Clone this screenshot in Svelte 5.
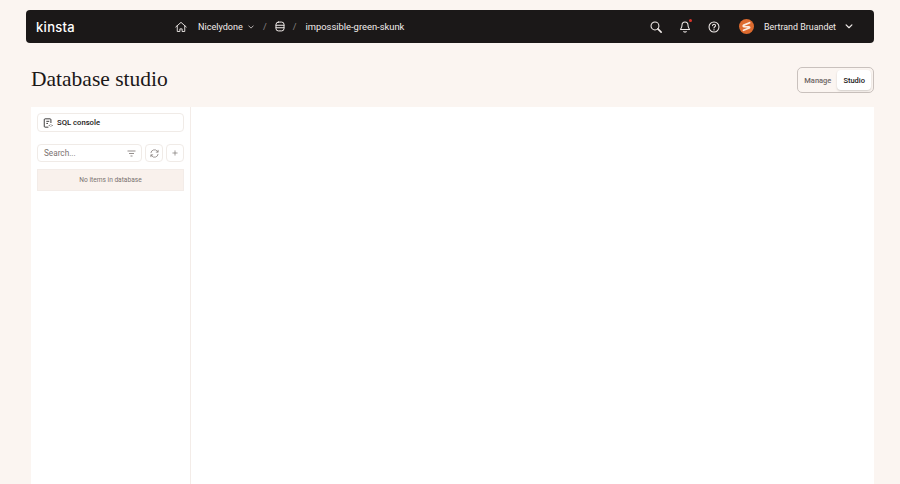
<script>
  let tab = $state("Studio");
  const tabs = ["Manage", "Studio"];
</script>

<div class="page">
  <header class="nav">
    <span class="logo">kinsta</span>
    <div class="crumbs">
      <svg class="ico" width="12" height="12" viewBox="0 0 16 16"><path d="M1 8 8 1.800 15 8M3 6.500V14h3.500v-3.500h3V14H13V6.500"/></svg>
      <span class="crumb first">Nicelydone</span>
      <svg class="ico chev-s" width="6" height="4" viewBox="0 0 8 5"><path d="M1 1l3 3 3-3"/></svg>
      <span class="sep one">/</span>
      <svg class="ico" width="10" height="11" viewBox="0 0 12 13"><rect x="1.200" y="1.200" width="9.600" height="10.600" rx="2.800"/><path d="M1.200 5h9.600M1.200 8h9.600"/></svg>
      <span class="sep two">/</span>
      <span class="crumb slug">impossible-green-skunk</span>
    </div>
    <div class="actions">
      <svg class="ico" width="12" height="12" viewBox="0 0 14 14"><circle cx="5.800" cy="5.800" r="4.600"/><path d="M9.200 9.200 13 13" stroke-width="1.800"/></svg>
      <span class="bell">
        <svg class="ico" width="12" height="12" viewBox="0 0 14 14"><path d="M7 1.200c-2.300 0-3.500 1.700-3.500 3.800 0 2.800-1.300 4-1.800 4.800h10.600c-.5-.8-1.800-2-1.800-4.800 0-2.100-1.200-3.800-3.500-3.800zM5.600 12.200c.5 1 2.300 1 2.800 0"/></svg>
        <i class="dot"></i>
      </span>
      <svg class="ico" width="12" height="12" viewBox="0 0 14 14"><circle cx="7" cy="7" r="5.800"/><path d="M5.300 5.400c.2-2.100 3.500-2.100 3.500 0 0 1.400-1.800 1.300-1.800 2.800M7 10v.4"/></svg>
      <div class="user">
        <svg width="15" height="15" viewBox="0 0 16 16"><circle cx="8" cy="8" r="8" fill="#dd6a2e"/><path d="M11.300 4 5.200 6.500c-1 .5-.8 1.400 0 1.600l5.400.4c.9.100.9.800.2 1.100L4.800 12" fill="none" stroke="#fbeadf" stroke-width="1.900" stroke-linecap="round"/></svg>
        <span class="name">Bertrand Bruandet</span>
        <svg class="ico" width="8" height="5" viewBox="0 0 9 6"><path d="M1 1l3.500 3.500L8 1" stroke-width="1.400"/></svg>
      </div>
    </div>
  </header>

  <div class="head">
    <h1>Database studio</h1>
    <div class="switch">
      {#each tabs as t}
        <button class:on={tab === t} onclick={() => (tab = t)}>{t}</button>
      {/each}
    </div>
  </div>

  <main class="panel">
    <aside class="side">
      <button class="console">
        <svg class="dark" width="10" height="10" viewBox="0 0 12 12"><path d="M6.500 11H2.500A1 1 0 0 1 1.500 10V2A1 1 0 0 1 2.500 1h6a1 1 0 0 1 1 1v4M4 4h3.500M4 6.500h2"/><path d="M8.500 8l-1 1 1 1M10 8l1 1-1 1" stroke-width=".9"/></svg>
        SQL console
      </button>
      <div class="tools">
        <div class="search">
          <span>Search...</span>
          <svg class="gray" width="9" height="7" viewBox="0 0 9 7"><path d="M.5 1h8M2 3.500h5M3.500 6h2"/></svg>
        </div>
        <button class="sq" aria-label="Refresh">
          <svg class="gray" width="9" height="9" viewBox="0 0 10 10"><path d="M1 4.500A4 4 0 0 1 8.200 2.500L9 3.500M9 1v2.500H6.500M9 5.500A4 4 0 0 1 1.800 7.500L1 6.500M1 9V6.500h2.500"/></svg>
        </button>
        <button class="sq" aria-label="Add">
          <svg class="gray" width="6" height="6" viewBox="0 0 7 7"><path d="M3.500.5v6M.5 3.500h6"/></svg>
        </button>
      </div>
      <div class="empty">No items in database</div>
    </aside>
    <section class="content"></section>
  </main>
</div>

<style>
  :global(body) {
    background: #fbf5f1;
    font-family: Roboto, "Liberation Sans", sans-serif;
  }
  .page {
    height: 484px;
    box-sizing: border-box;
    padding: 10px 26px 0;
    display: flex;
    flex-direction: column;
    overflow: hidden;
  }
  .nav {
    height: 33px;
    flex: none;
    background: #1b1818;
    border-radius: 4px;
    display: flex;
    align-items: center;
    color: #f2ecea;
    font-size: 9.100px;
    padding: 0 21px 0 10px;
  }
  .logo {
    width: 139px;
    font-family: Inter, sans-serif;
    font-size: 13px;
    font-weight: 500;
    letter-spacing: 0.300px;
    color: #fff;
  }
  .ico {
    fill: none;
    stroke: currentColor;
    stroke-width: 1.200;
    stroke-linecap: round;
    stroke-linejoin: round;
    flex: none;
  }
  .crumbs {
    display: flex;
    align-items: center;
    flex: 1;
  }
  .crumb.first {
    margin-left: 11px;
  }
  .slug {
    font-size: 9.400px;
  }
  .chev-s {
    margin-left: 5px;
    opacity: 0.8;
  }
  .sep {
    color: #8d8785;
  }
  .sep.one {
    margin: 0 8px 0 9px;
  }
  .sep.two {
    margin: 0 9px 0 8px;
  }
  .actions {
    display: flex;
    align-items: center;
    gap: 17px;
  }
  .bell {
    position: relative;
    display: flex;
  }
  .dot {
    position: absolute;
    top: -2px;
    right: -1px;
    width: 3px;
    height: 3px;
    border-radius: 50%;
    background: #d9352b;
  }
  .user {
    display: flex;
    align-items: center;
    margin-left: 2px;
  }
  .name {
    margin: 0 9px 0 10px;
    font-size: 8.900px;
  }
  .head {
    display: flex;
    align-items: center;
    justify-content: space-between;
    padding: 24px 0 14px 5px;
  }
  h1 {
    margin: 0 0 2px;
    font-family: "Liberation Serif", serif;
    font-weight: 400;
    font-size: 21.500px;
    line-height: 24px;
    color: #1b1818;
  }
  .switch {
    display: flex;
    padding: 2px 2px 2px 0;
    border: 1px solid #c9c1bd;
    border-radius: 5px;
  }
  .switch button {
    border: 0;
    background: none;
    font: 500 7.500px Roboto, "Liberation Sans", sans-serif;
    color: #6e6664;
    height: 20px;
    padding: 0 6px;
    border-radius: 4px;
  }
  .switch button.on {
    background: #fff;
    color: #1b1818;
    box-shadow: 0 1px 2px #0000002b;
  }
  .panel {
    flex: 1;
    margin-left: 5px;
    display: flex;
    background: #fff;
  }
  .side {
    width: 160px;
    box-sizing: border-box;
    padding: 6px;
    border-right: 1px solid #f3ece8;
  }
  .console {
    width: 100%;
    height: 19px;
    display: flex;
    align-items: center;
    gap: 4px;
    padding: 0 5px;
    background: #fff;
    border: 1px solid #f0ebe7;
    border-radius: 4px;
    font: 500 7.700px Roboto, "Liberation Sans", sans-serif;
    color: #1b1818;
  }
  .dark {
    fill: none;
    stroke: #1b1818;
    stroke-width: 1;
  }
  .gray {
    fill: none;
    stroke: #7a7270;
    stroke-width: 0.800;
  }
  .tools {
    display: flex;
    gap: 3px;
    margin-top: 12px;
  }
  .search {
    flex: 1;
    height: 18px;
    box-sizing: border-box;
    display: flex;
    align-items: center;
    justify-content: space-between;
    padding: 0 5px 0 6px;
    border: 1px solid #f0ebe7;
    border-radius: 4px;
    font-size: 8.200px;
    color: #7a7270;
  }
  .sq {
    width: 18px;
    height: 18px;
    padding: 0;
    display: flex;
    align-items: center;
    justify-content: center;
    background: #fff;
    border: 1px solid #f0ebe7;
    border-radius: 4px;
  }
  .empty {
    margin-top: 7px;
    height: 22px;
    display: flex;
    align-items: center;
    justify-content: center;
    background: #f9f1ec;
    border: 1px solid #f3ece8;
    box-sizing: border-box;
    font-size: 6.600px;
    color: #7a7270;
  }
  .content {
    flex: 1;
  }
</style>
